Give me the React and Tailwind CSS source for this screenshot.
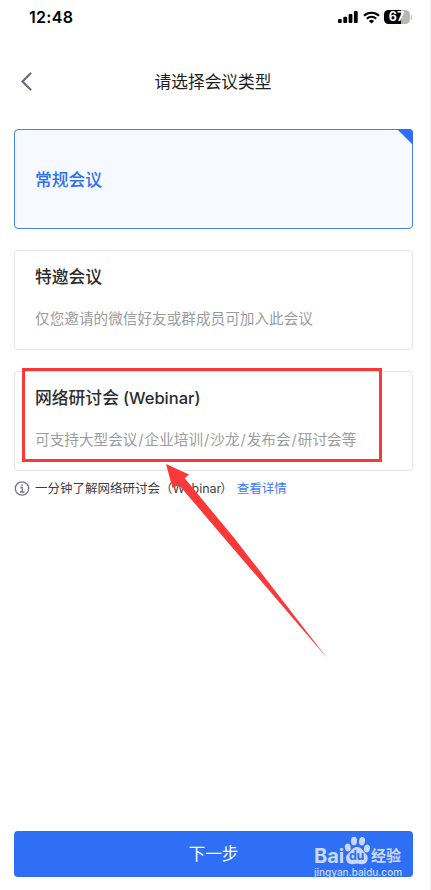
import clsx from "clsx";

const meetingTypes = [
  { title: "常规会议", active: true },
  { title: "特邀会议", desc: ["仅您邀请的微信好友或群成员可加入此会议"] },
  {
    title: "网络研讨会",
    suffix: "(Webinar)",
    desc: ["可支持大型会议", "企业培训", "沙龙", "发布会", "研讨会等"],
  },
];

const StatusBar = () => {
  return (
    <div className="flex h-[34px] items-center justify-between pr-[18px] pl-[29px]">
      <span className="text-[16px] leading-[34px] font-semibold tracking-[0.3px] text-black">
        12:48
      </span>
      <div className="flex items-center">
        <svg width="20" height="12" viewBox="0 0 20 12" className="mr-[5px]">
          <rect x="0" y="8" width="3.8" height="4" rx="1" />
          <rect x="5.3" y="5.7" width="3.8" height="6.3" rx="1" />
          <rect x="10.6" y="3" width="3.8" height="9" rx="1" />
          <rect x="15.9" y="0" width="3.8" height="12" rx="1" />
        </svg>
        <svg
          width="17"
          height="13"
          viewBox="0 0 17 13"
          fill="none"
          stroke="black"
          strokeWidth="2.1"
          className="mr-[4px]"
        >
          <path d="M1 4.8a10.8 10.8 0 0 1 15 0" />
          <path d="M3.8 7.7a6.8 6.8 0 0 1 9.4 0" />
          <path d="M8.5 12.6L5.9 9.9a3.8 3.8 0 0 1 5.2 0z" fill="black" stroke="none" />
        </svg>
        <div className="flex h-[14px] w-[26px] items-center justify-center rounded-[4.5px] bg-linear-to-r from-black from-67% to-[#b6b6b8] to-67%">
          <span className="text-[12.5px] leading-[14px] font-bold text-white">67</span>
        </div>
        <div className="ml-px h-[5px] w-[1.5px] rounded-r bg-[#b6b6b8]" />
      </div>
    </div>
  );
};

const Header = () => {
  return (
    <div className="grid h-[95px] grid-cols-[60px_1fr_64px] items-center">
      <svg
        width="12"
        height="20"
        viewBox="0 0 12 20"
        fill="none"
        stroke="#6b6d75"
        strokeWidth="2.2"
        strokeLinecap="round"
        className="ml-[20px]"
      >
        <path d="M10.500 1.500L2.500 9.500L10.500 17.500" />
      </svg>
      <h1 className="pt-[3px] text-center text-[16.7px] text-[#1d1d1f]">请选择会议类型</h1>
    </div>
  );
};

const MeetingCard = ({ title, suffix, desc, active }) => {
  return (
    <div
      className={clsx(
        "relative flex h-[100px] flex-col rounded-[4px] border pl-[20px]",
        active
          ? "justify-center border-[#4a80f6] bg-[#f6f9ff] pt-[3px]"
          : "border-[#e3e4e6] bg-white pt-[14px]"
      )}
    >
      <h2
        className={clsx(
          "text-[16.8px] leading-[25px] font-medium",
          active ? "text-[#2e6ff6]" : "text-[#2a2c30]"
        )}
      >
        {title}
        {suffix && <span className="ml-[4px] text-[16.5px]">{suffix}</span>}
      </h2>
      {desc && (
        <p className="mt-[17px] text-[14.63px] leading-[24px] whitespace-nowrap text-[#9b9ca0]">
          {desc.map((part, i) => (
            <span key={part}>
              {i > 0 && <span className="inline-block w-[7.2px] text-center">/</span>}
              {part}
            </span>
          ))}
        </p>
      )}
      {active && (
        <svg
          width="16"
          height="16"
          viewBox="0 0 16 16"
          fill="#2e6ff6"
          className="absolute -top-px -right-px"
        >
          <path d="M0 0H12a4 4 0 0 1 4 4V16z" />
        </svg>
      )}
    </div>
  );
};

const Hint = () => {
  return (
    <div className="mt-[8px] flex h-[20px] items-center text-[12.5px] whitespace-nowrap text-[#3c3d42]">
      <svg
        width="16"
        height="16"
        viewBox="0 0 16 16"
        fill="none"
        stroke="#72737f"
        strokeWidth="1.3"
        className="mr-[5px]"
      >
        <circle cx="8" cy="7.5" r="6.7" />
        <path d="M6.400 6.500h1.800v4.400M6 11h4.400" />
        <circle cx="8" cy="4.1" r="0.9" fill="#72737f" stroke="none" />
      </svg>
      <span>一分钟了解网络研讨会</span>
      <span>（</span>
      <span className="-mr-px text-[12.5px]">Webinar</span>
      <span>）</span>
      <a className="ml-[4px] text-[#3b7cf8]">查看详情</a>
    </div>
  );
};

const Watermark = () => {
  return (
    <div className="absolute top-[4px] left-[300px] w-[92px] text-[#c9d9fc]">
      <div className="flex h-[31px] items-end">
        <span className="w-[30px] text-[20px] leading-[20px] font-bold">Bai</span>
        <div className="relative h-[31px] w-[27px]">
          <svg width="27" height="31" viewBox="0 0 27 31" fill="currentColor">
            <ellipse cx="3.800" cy="12.500" rx="2.900" ry="3.900" transform="rotate(-12 3.800 12.500)" />
            <ellipse cx="10" cy="6" rx="3" ry="4.200" />
            <ellipse cx="18" cy="6.200" rx="3" ry="4.200" transform="rotate(10 18 6.200)" />
            <ellipse cx="23" cy="13.500" rx="3" ry="3.900" transform="rotate(12 23 13.500)" />
            <path d="M13 12c3.500 0 5 2.500 6.500 4.300 1.700 2 4.200 3.400 4.200 6.800 0 3.800-2.200 6.200-5.500 6.200-1.800 0-2.800-.6-5.200-.6s-3.400.6-5.200.6c-3.300 0-5.800-2.400-5.800-6.200 0-3.400 2.800-4.800 4.500-6.800 1.500-1.800 3-4.300 6.500-4.300z" />
          </svg>
          <span className="absolute top-[14px] left-[5px] text-[12.5px] leading-[14px] font-bold tracking-[-0.5px] text-[#2e6ff6]">
            du
          </span>
        </div>
        <span className="text-[15px] leading-[20px] font-bold">经验</span>
      </div>
      <p className="pt-px text-[10px] leading-[11px] font-medium">jingyan.baidu.com</p>
    </div>
  );
};

const App = () => {
  return (
    <div className="relative flex h-[890px] w-[431px] flex-col overflow-hidden border-r border-[#f0f0f1] bg-white font-['Inter','Noto_Sans_CJK_SC',sans-serif]">
      <StatusBar />
      <Header />
      <main className="flex flex-col pr-[17px] pl-[14px]">
        <div className="flex flex-col gap-[21px]">
          {meetingTypes.map((item) => (
            <MeetingCard key={item.title} {...item} />
          ))}
        </div>
        <Hint />
      </main>
      <div className="relative mt-auto mr-[17px] mb-[13px] ml-[14px]">
        <button className="block h-[46px] w-full rounded-[4px] bg-[#2e6ff6] pt-px text-[16.7px] text-white">
          下一步
        </button>
        <Watermark />
      </div>
      <div className="absolute top-[368px] left-[22px] h-[94px] w-[360px] border-3 border-[#fb3838]" />
      <svg
        width="164"
        height="196"
        viewBox="0 0 164 196"
        fill="#fb3838"
        className="absolute top-[463px] left-[165px]"
      >
        <path d="M1 1L24 11.500L19.700 15.300L70 76L162 195L60 76L14 22L7.500 25z" />
      </svg>
    </div>
  );
};

export default App;
